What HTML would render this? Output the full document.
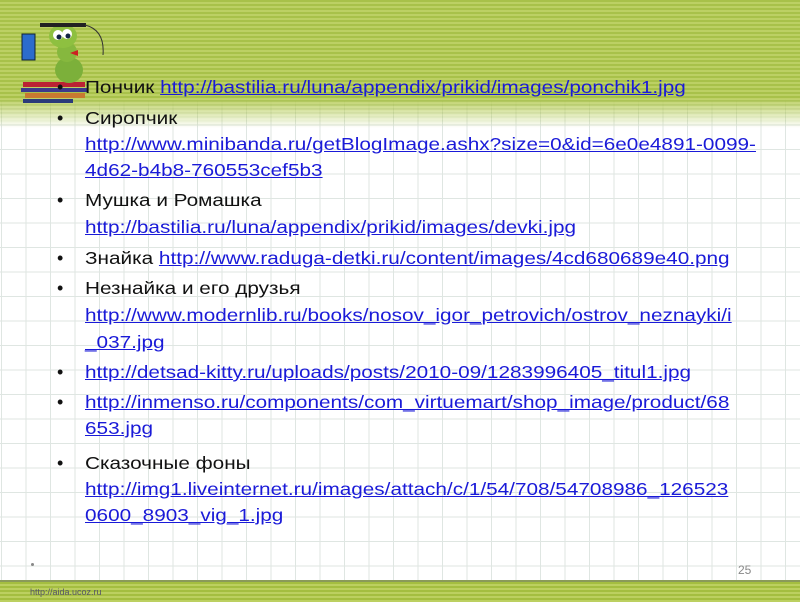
<!DOCTYPE html>
<html><head><meta charset="utf-8"><style>
html,body{margin:0;padding:0}
body{width:800px;height:600px;position:relative;overflow:hidden;font-family:"Liberation Sans",sans-serif;
background-color:#fff;
background-image:linear-gradient(to right,#dfe6e2 1px,transparent 1px),linear-gradient(to bottom,#dfe6e2 1px,transparent 1px);
background-size:24.5px 24.5px;background-position:1px 2px;}
.top{position:absolute;left:0;top:0;width:800px;height:128px;
background:repeating-linear-gradient(to bottom,#a8c14a 0,#a8c14a 2px,#bcd064 2px,#bcd064 4px);
-webkit-mask:linear-gradient(to bottom,#000 0,#000 98px,transparent 128px);mask:linear-gradient(to bottom,#000 0,#000 98px,transparent 128px);}
.bot{position:absolute;left:0;top:580px;width:800px;height:20px;border-top:2px solid #8a9a5a;
background:repeating-linear-gradient(to bottom,#a4be40 0,#a4be40 2px,#bcd060 2px,#bcd060 4px);}
.l{position:absolute;left:85px;font-size:17.5px;color:#111;white-space:nowrap;line-height:20px;transform:scaleX(1.185);transform-origin:0 0}
.l a{color:#1a1ad8;text-decoration:underline}
.b{position:absolute;left:57px;font-size:18px;color:#111}
</style></head><body>
<div class="top"></div>
<svg style="position:absolute;left:15px;top:10px" width="90" height="95">
<rect x="8" y="72" width="62" height="5" fill="#b23"/><rect x="6" y="78" width="66" height="4" fill="#3b3a8c"/>
<rect x="10" y="83" width="60" height="5" fill="#c87a30"/><rect x="8" y="89" width="50" height="4" fill="#2a3a7a"/>
<rect x="7" y="24" width="13" height="26" fill="#2c6ccc" stroke="#123" stroke-width="1"/>
<ellipse cx="54" cy="60" rx="14" ry="13" fill="#7cb03a"/>
<ellipse cx="52" cy="42" rx="10" ry="10" fill="#86b83e"/>
<ellipse cx="48" cy="26" rx="14" ry="12" fill="#8ec040"/>
<circle cx="43" cy="25" r="5" fill="#fff"/><circle cx="52" cy="24" r="5" fill="#fff"/>
<circle cx="44" cy="27" r="2.5" fill="#124"/><circle cx="53" cy="26" r="2.5" fill="#124"/>
<rect x="25" y="13" width="46" height="4" fill="#222"/>
<path d="M70 15 q20 5 18 30" stroke="#333" fill="none"/>
<path d="M55 43 l8 -3 l0 6z" fill="#c22"/>
</svg>
<div class="b" style="top:77px">•</div><div class="l" style="top:77px">Пончик <a>http://bastilia.ru/luna/appendix/prikid/images/ponchik1.jpg</a></div>
<div class="b" style="top:108px">•</div><div class="l" style="top:108px">Сиропчик</div>
<div class="l" style="top:134px"><a>http://www.minibanda.ru/getBlogImage.ashx?size=0&amp;id=6e0e4891-0099-</a></div>
<div class="l" style="top:160px"><a>4d62-b4b8-760553cef5b3</a></div>
<div class="b" style="top:190px">•</div><div class="l" style="top:190px">Мушка и Ромашка</div>
<div class="l" style="top:217px"><a>http://bastilia.ru/luna/appendix/prikid/images/devki.jpg</a></div>
<div class="b" style="top:248px">•</div><div class="l" style="top:248px">Знайка <a>http://www.raduga-detki.ru/content/images/4cd680689e40.png</a></div>
<div class="b" style="top:278px">•</div><div class="l" style="top:278px">Незнайка и его друзья</div>
<div class="l" style="top:305px"><a>http://www.modernlib.ru/books/nosov_igor_petrovich/ostrov_neznayki/i</a></div>
<div class="l" style="top:332px"><a>_037.jpg</a></div>
<div class="b" style="top:362px">•</div><div class="l" style="top:362px"><a>http://detsad-kitty.ru/uploads/posts/2010-09/1283996405_titul1.jpg</a></div>
<div class="b" style="top:392px">•</div><div class="l" style="top:392px"><a>http://inmenso.ru/components/com_virtuemart/shop_image/product/68</a></div>
<div class="l" style="top:418px"><a>653.jpg</a></div>
<div class="b" style="top:453px">•</div><div class="l" style="top:453px">Сказочные фоны</div>
<div class="l" style="top:479px"><a>http://img1.liveinternet.ru/images/attach/c/1/54/708/54708986_126523</a></div>
<div class="l" style="top:505px"><a>0600_8903_vig_1.jpg</a></div>
<div style="position:absolute;left:31px;top:563px;width:3px;height:3px;background:#888;border-radius:50%"></div>
<div style="position:absolute;left:738px;top:563px;font-size:12px;color:#888">25</div>
<div class="bot"></div>
<div style="position:absolute;left:30px;top:587px;font-size:9px;color:#556">http://aida.ucoz.ru</div>
</body></html>
